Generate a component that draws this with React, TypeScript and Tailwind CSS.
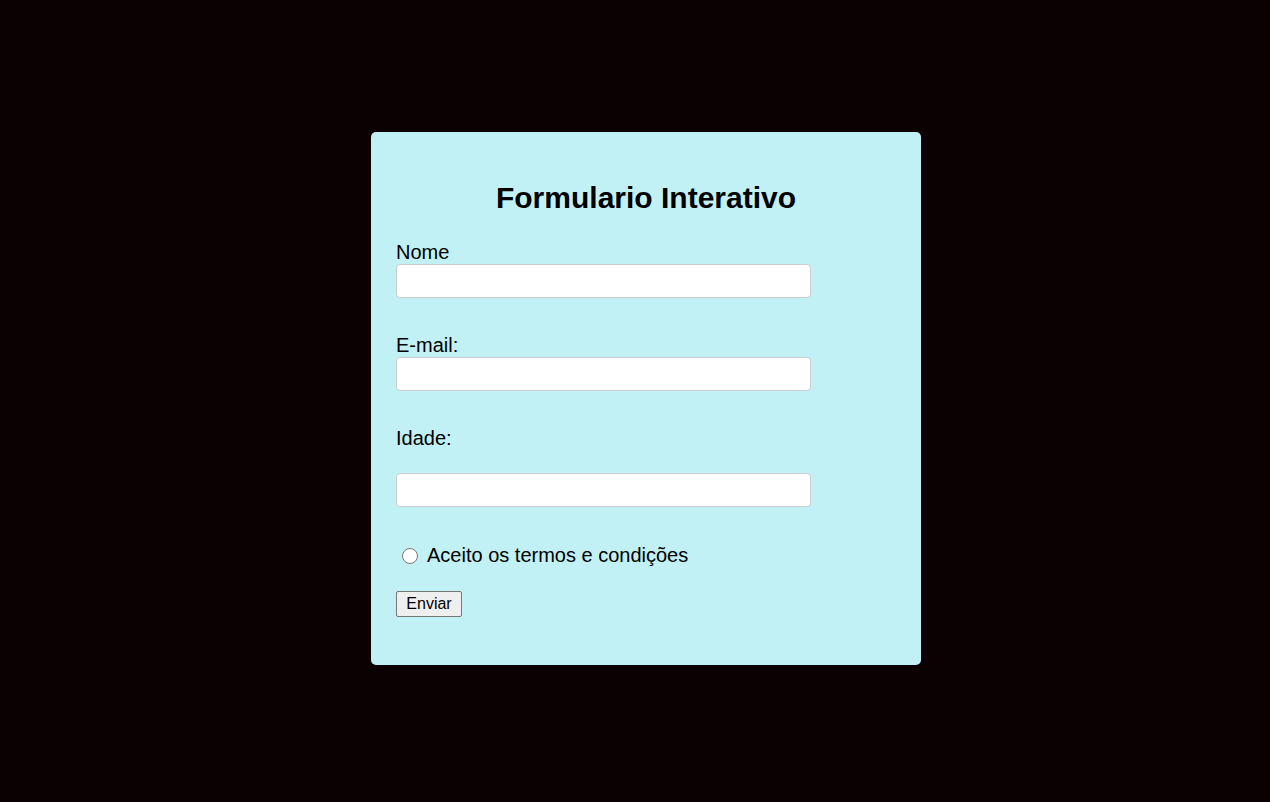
export default function App() {
  return (
    <div className="min-h-screen w-full bg-[#0b0103] pt-[132px] pb-[137px] font-['Liberation_Sans',Arial,sans-serif] text-black">
      <form
        className="ml-[371px] w-[550px] h-[533px] rounded-[5px] bg-[#c2f1f5] px-[25px] pt-[49px]"
        onSubmit={(e) => e.preventDefault()}
      >
        <h2 className="text-center text-[30px] font-bold leading-[34px]">Formulario Interativo</h2>

        {/* Nome */}
        <label htmlFor="nome" className="mt-[26px] block text-[20px] leading-[23px]">
          Nome
        </label>
        <input
          id="nome"
          type="text"
          className="block h-[34px] w-[415px] rounded-[4px] border border-[#cccccc] bg-white px-2 text-base outline-none"
        />

        {/* E-mail */}
        <label htmlFor="email" className="mt-[36px] block text-[20px] leading-[23px]">
          E-mail:
        </label>
        <input
          id="email"
          type="email"
          className="block h-[34px] w-[415px] rounded-[4px] border border-[#cccccc] bg-white px-2 text-base outline-none"
        />

        {/* Idade */}
        <label htmlFor="idade" className="mt-[36px] block text-[20px] leading-[23px]">
          Idade:
        </label>
        <input
          id="idade"
          type="number"
          className="mt-[23px] block h-[34px] w-[415px] rounded-[4px] border border-[#cccccc] bg-white px-2 text-base outline-none"
        />

        {/* Termos */}
        <div className="mt-[37px] flex items-center text-[20px] leading-[23px]">
          <input id="termos" type="radio" className="ml-[6px] mr-[9px] h-[16px] w-[16px]" />
          <label htmlFor="termos">Aceito os termos e condições</label>
        </div>

        <button
          type="submit"
          className="mt-[24px] block h-[26px] w-[66px] rounded-[2px] border border-[#767676] bg-[#efefef] text-base leading-[18px]"
        >
          Enviar
        </button>
      </form>
    </div>
  );
}
